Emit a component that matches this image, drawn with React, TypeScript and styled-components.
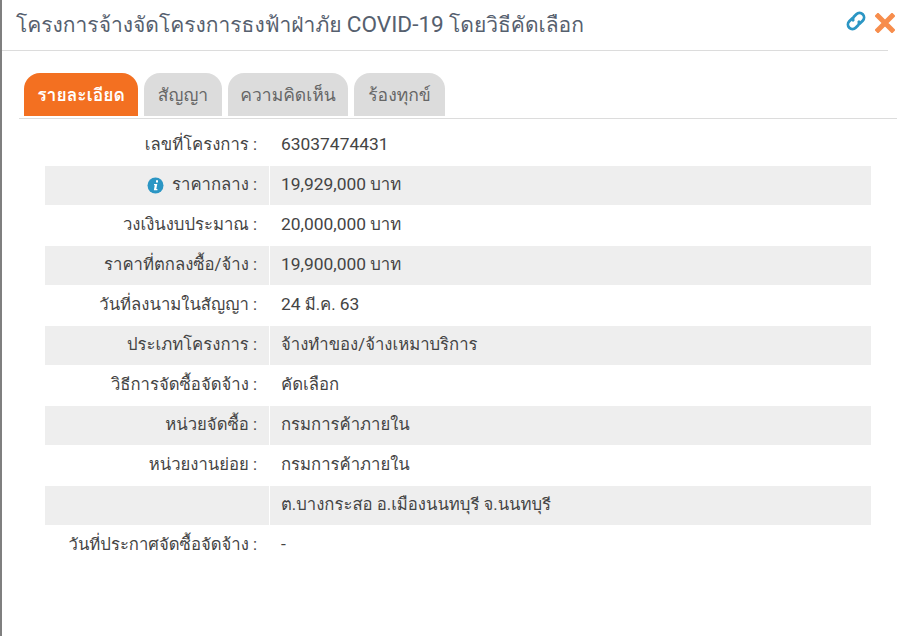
import React from "react";
import styled, { createGlobalStyle } from "styled-components";

const Global = createGlobalStyle`
  html, body { margin: 0; padding: 0; background: #fff; }
  body { font-family: Roboto, Loma, sans-serif; }
`;
const Page = styled.div`
  width: 912px; height: 636px; box-sizing: border-box; overflow: hidden;
  border-left: 2px solid #7f7f7f; background: #fff;
`;
const Header = styled.header`
  width: 886px; height: 51px; box-sizing: border-box; border-bottom: 1px solid #dcdcdc;
  display: flex; align-items: center; justify-content: space-between;
  padding: 0 0 0 14px;
`;
const Title = styled.h1`
  margin: 0; font-size: 21px; font-weight: 400; color: #56606e; line-height: 52px; white-space: nowrap;
`;
const TitleLatin = styled.span`
  font-size: 22.6px;
`;
const Actions = styled.div`
  display: flex; align-items: flex-start; gap: 9px; margin-right: -7px; height: 24px;
`;
const LinkSvg = styled.svg`
  margin-top: -2px;
`;
const Tabs = styled.nav`
  margin: 22px 0 0 17px; width: 878px; height: 46px; box-sizing: border-box;
  border-bottom: 1px solid #dcdcdc; padding-left: 5px; display: flex; gap: 6px;
`;
const Tab = styled.div<{ $active?: boolean; $w: number }>`
  width: ${p => p.$w}px; height: 43px; border-radius: 16px 16px 0 0;
  background: ${p => (p.$active ? "#f37021" : "#dcdcdc")};
  color: ${p => (p.$active ? "#fff" : "#666")};
  font-weight: ${p => (p.$active ? 700 : 400)}; font-size: 17.5px;
  display: flex; align-items: center; justify-content: center;
`;
const Table = styled.div`
  margin: 7px 0 0 43px; width: 826px; display: flex; flex-direction: column;
`;
const Row = styled.div<{ $alt?: boolean }>`
  height: 39px; margin-bottom: 1px; display: grid; grid-template-columns: 224px 1fr;
  background: ${p => (p.$alt ? "#eeeeee" : "transparent")};
  font-size: 16.7px; color: #444; line-height: 37px;
`;
const Label = styled.div`
  display: flex; justify-content: flex-end; align-items: flex-start; gap: 8px;
  padding-right: 12px; white-space: nowrap;
`;
const InfoSvg = styled.svg`
  align-self: center;
`;
const Value = styled.div<{ $alt?: boolean }>`
  padding-left: 11px; border-left: 1px solid ${p => (p.$alt ? "#fff" : "transparent")}; white-space: nowrap;
`;
const Digits = styled.span`
  font-size: 17.4px;
`;

const rows: [string, string][] = [
  ["เลขที่โครงการ :", "63037474431"],
  ["ราคากลาง :", "19,929,000 บาท"],
  ["วงเงินงบประมาณ :", "20,000,000 บาท"],
  ["ราคาที่ตกลงซื้อ/จ้าง :", "19,900,000 บาท"],
  ["วันที่ลงนามในสัญญา :", "24 มี.ค. 63"],
  ["ประเภทโครงการ :", "จ้างทำของ/จ้างเหมาบริการ"],
  ["วิธีการจัดซื้อจัดจ้าง :", "คัดเลือก"],
  ["หน่วยจัดซื้อ :", "กรมการค้าภายใน"],
  ["หน่วยงานย่อย :", "กรมการค้าภายใน"],
  ["", "ต.บางกระสอ อ.เมืองนนทบุรี จ.นนทบุรี"],
  ["วันที่ประกาศจัดซื้อจัดจ้าง :", "-"],
];

const renderValue = (text: string) =>
  text.split(/([0-9,-]+)/).map((part, i) =>
    i % 2 === 1 ? <Digits key={i}>{part}</Digits> : part
  );

const LinkIcon = () => (
  <LinkSvg width="20" height="20" viewBox="0 0 20 20" fill="none" stroke="#2b96c4" strokeWidth="2.8" strokeLinecap="round">
    <g transform="rotate(-45 10 10)">
      <path d="M9.5 5.5 H5 a4.5 4.5 0 0 0 0 9 H8.5 a3.5 3.5 0 0 0 3-2" />
      <path d="M10.5 14.5 H15 a4.5 4.5 0 0 0 0-9 H11.5 a3.5 3.5 0 0 0-3 2" />
    </g>
  </LinkSvg>
);
const CloseIcon = () => (
  <svg width="20" height="20" viewBox="0 0 20 20" stroke="#f78d4c" strokeWidth="5" strokeLinecap="square">
    <path d="M3 3 L17 17 M17 3 L3 17" />
  </svg>
);
const InfoIcon = () => (
  <InfoSvg width="17" height="17" viewBox="0 0 17 17">
    <circle cx="8.5" cy="8.5" r="8" fill="#2b96c4" />
    <path d="M9 3.2h2v2.2H9z M7 7h3.3l-1 5h1.1v1.3H6.8l1-5H7z" fill="#fff" />
  </InfoSvg>
);

export default function App() {
  return (
    <Page>
      <Global />
      <Header>
        <Title>โครงการจ้างจัดโครงการธงฟ้าฝ่าภัย <TitleLatin>COVID-19</TitleLatin> โดยวิธีคัดเลือก</Title>
        <Actions>
          <LinkIcon />
          <CloseIcon />
        </Actions>
      </Header>
      <Tabs>
        <Tab $active $w={114}>รายละเอียด</Tab>
        <Tab $w={78}>สัญญา</Tab>
        <Tab $w={120}>ความคิดเห็น</Tab>
        <Tab $w={91}>ร้องทุกข์</Tab>
      </Tabs>
      <Table>
        {rows.map(([l, v], i) => (
          <Row key={i} $alt={i % 2 === 1}>
            <Label>
              {i === 1 && <InfoIcon />}
              {l}
            </Label>
            <Value $alt={i % 2 === 1}>{renderValue(v)}</Value>
          </Row>
        ))}
      </Table>
    </Page>
  );
}
